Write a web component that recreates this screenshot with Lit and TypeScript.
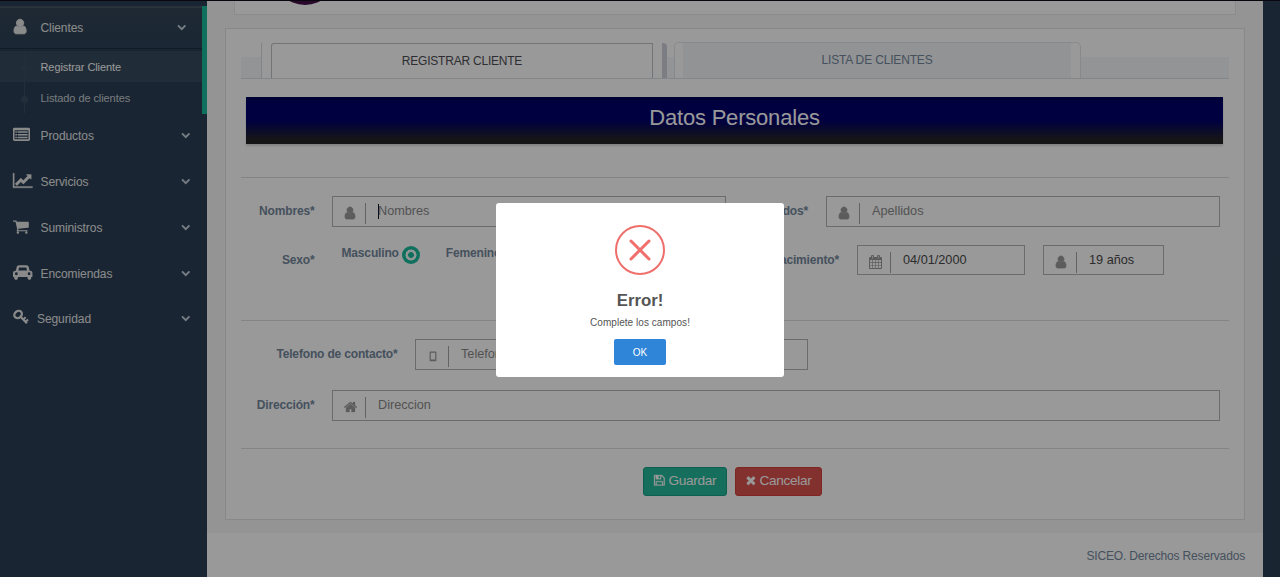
import { LitElement, html, svg, css, nothing } from "lit";
import { customElement, property } from "lit/decorators.js";

const ICONS: Record<string, { box: string; body: unknown }> = {
  user: {
    box: "256 0 1280 1792",
    body: svg`<path stroke="currentColor" stroke-width="100" d="M1536 1399q0 109-62.5 187t-150.5 78h-854q-88 0-150.5-78t-62.5-187q0-85 8.5-160.5t31.5-152 58.5-131 94-89 134.5-34.5q131 128 313 128t313-128q76 0 134.5 34.5t94 89 58.5 131 31.5 152 8.5 160.5zm-256-887q0 159-112.5 271.5t-271.5 112.5-271.5-112.5-112.5-271.5 112.5-271.5 271.5-112.5 271.5 112.5 112.5 271.5z"/>`,
  },
  chevron: {
    box: "0 0 1792 1792",
    body: svg`<path d="M1683 808l-742 741q-19 19-45 19t-45-19l-742-741q-19-19-19-45.5t19-45.5l166-165q19-19 45-19t45 19l531 531 531-531q19-19 45-19t45 19l166 165q19 19 19 45.5t-19 45.5z"/>`,
  },
  list: {
    box: "0 0 1792 1792",
    body: svg`<path fill-rule="evenodd" d="M160 176h1472q66 0 113 47t47 113v1088q0 66-47 113t-113 47h-1472q-66 0-113-47t-47-113v-1088q0-66 47-113t113-47zM160 490v880q0 32 32 32h1408q32 0 32-32v-880q0-32-32-32h-1408q-32 0-32 32z"/><path d="M250 560h160v160h-160zM250 840h160v160h-160zM250 1120h160v160h-160zM490 560h1050v160h-1050zM490 840h1050v160h-1050zM490 1120h1050v160h-1050z"/>`,
  },
  chart: {
    box: "0 0 2048 1792",
    body: svg`<path stroke="currentColor" stroke-width="40" d="M2048 1536v128h-2048v-1536h128v1408h1920zm-128-1248v435q0 21-19.5 29.5t-35.5-7.5l-121-121-633 633q-10 10-23 10t-23-10l-233-233-416 416-192-192 585-585q10-10 23-10t23 10l233 233 464-464-121-121q-16-16-7.5-35.5t29.5-19.5h435q14 0 23 9t9 23z"/>`,
  },
  cart: {
    box: "64 0 1664 1792",
    body: svg`<path d="M704 1536q0 52-38 90t-90 38-90-38-38-90 38-90 90-38 90 38 38 90zm896 0q0 52-38 90t-90 38-90-38-38-90 38-90 90-38 90 38 38 90zm128-1088v512q0 24-16.5 42.5t-40.5 21.5l-1044 122q13 60 13 70 0 16-24 64h920q26 0 45 19t19 45-19 45-45 19h-1024q-26 0-45-19t-19-45q0-11 8-31.5t16-36 21.5-40 15.5-29.5l-177-823h-204q-26 0-45-19t-19-45 19-45 45-19h256q16 0 28.5 6.5t19.5 15.5 13 24.5 8 26 5.5 29.5 4.5 26h1201q26 0 45 19t19 45z"/>`,
  },
  car: {
    box: "0 0 2048 1792",
    body: svg`<path fill-rule="evenodd" d="M640 128h768q90 0 162 58t94 146l85 370h43q106 0 181 75t75 181v384q0 14-9 23t-23 9h-96v90q0 80-56 136t-136 56-136-56-56-136v-90h-1024v90q0 80-56 136t-136 56-136-56-56-136v-90h-96q-14 0-23-9t-9-23v-384q0-106 75-181t181-75h43l85-370q22-88 94-146t162-58zM564 690h920l-80-311q-4-7-6-7h-748q-2 0-6 7zM352 880a150 150 0 1 0 0 300 150 150 0 1 0 0-300zM1696 880a150 150 0 1 0 0 300 150 150 0 1 0 0-300z"/>`,
  },
  key: {
    box: "0 0 18 18",
    body: svg`<g fill="none" stroke="currentColor"><ellipse cx="5.4" cy="5.8" rx="4.3" ry="3.5" transform="rotate(-40 5.4 5.8)" stroke-width="2.4"/><path d="M8 8.1l6.7 6.9" stroke-width="2.3"/><path d="M10.8 11.2l2.6-2.5M13.2 13.7l2.7-2.6" stroke-width="2.1"/></g>`,
  },
  calendar: {
    box: "64 0 1664 1792",
    body: svg`<path fill-rule="evenodd" d="M192 256h128v-96q0-66 47-113t113-47h64q66 0 113 47t47 113v96h384v-96q0-66 47-113t113-47h64q66 0 113 47t47 113v96h128q52 0 90 38t38 90v1280q0 52-38 90t-90 38H192q-52 0-90-38t-38-90V384q0-52 38-90t90-38zM192 640v256h288V640zM560 640v256h296V640zM936 640v256h296V640zM1312 640v256h288V640zM192 976v288h288V976zM560 976v288h296V976zM936 976v288h296V976zM1312 976v288h288V976zM192 1344v320h288v-320zM560 1344v320h296v-320zM936 1344v320h296v-320zM1312 1344v320h288v-320zM470 140v300h84V140zM1238 140v300h84V140z"/>`,
  },
  mobile: {
    box: "0 0 1024 1792",
    body: svg`<path fill-rule="evenodd" d="M180 320h664q100 0 100 100v1044q0 100-100 100H180q-100 0-100-100V420q0-100 100-100zM230 490v860h564V490z"/>`,
  },
  home: {
    box: "64 0 1664 1792",
    body: svg`<path stroke="currentColor" stroke-width="30" d="M1472 992v480q0 26-19 45t-45 19h-384v-384h-256v384h-384q-26 0-45-19t-19-45v-480q0-1 .5-3t.5-3l575-474 575 474q1 2 1 6zm223-69l-62 74q-8 9-21 11h-3q-13 0-21-7l-692-577-692 577q-12 8-24 7-13-2-21-11l-62-74q-8-10-7-23.5t11-21.5l719-599q32-26 76-26t76 26l244 204v-195q0-14 9-23t23-9h192q14 0 23 9t9 23v408l219 182q10 8 11 21.5t-7 23.5z"/>`,
  },
  save: {
    box: "128 0 1536 1792",
    body: svg`<path stroke="currentColor" stroke-width="40" d="M512 1536h768v-384h-768v384zm896 0h128v-896q0-14-10-38.5t-20-34.5l-281-281q-10-10-34-20t-39-10v416q0 40-28 68t-68 28h-576q-40 0-68-28t-28-68v-416h-128v1280h128v-416q0-40 28-68t68-28h832q40 0 68 28t28 68v416zm-384-928v-320q0-13-9.5-22.5t-22.5-9.5h-192q-13 0-22.5 9.5t-9.5 22.5v320q0 13 9.5 22.5t22.5 9.5h192q13 0 22.5-9.5t9.5-22.5zm640 32v928q0 40-28 68t-68 28h-1344q-40 0-68-28t-28-68v-1344q0-40 28-68t68-28h928q40 0 88 20t76 48l280 280q28 28 48 76t20 88z"/>`,
  },
  times: {
    box: "192 0 1408 1792",
    body: svg`<path stroke="currentColor" stroke-width="70" d="M1490 1322q0 40-28 68l-136 136q-28 28-68 28t-68-28l-294-294-294 294q-28 28-68 28t-68-28l-136-136q-28-28-28-68t28-68l294-294-294-294q-28-28-28-68t28-68l136-136q28-28 68-28t68 28l294 294 294-294q28-28 68-28t68 28l136 136q28 28 28 68t-28 68l-294 294 294 294q28 28 28 68z"/>`,
  },
};

@customElement("fa-icon")
class FaIcon extends LitElement {
  @property() name = "user";
  static styles = css`
    :host { display: inline-flex; flex: none; height: 1em; }
    svg { height: 100%; width: auto; fill: currentColor; display: block; overflow: visible; }
  `;
  render() {
    const icon = ICONS[this.name];
    return html`<svg viewBox=${icon.box}>${icon.body}</svg>`;
  }
}

@customElement("form-field")
class FormField extends LitElement {
  @property() icon = "user";
  @property() text = "";
  @property({ type: Boolean }) filled = false;
  @property({ type: Boolean }) caret = false;
  static styles = css`
    :host { display: flex; box-sizing: border-box; height: 31px; border: 1px solid #b4b4b4; color: #8a8a8a; font-size: 12.7px; letter-spacing: 0; }
    :host([filled]) { color: #4a4a4a; height: 30px; }
    .addon { width: 33px; height: 21px; margin-top: 6px; flex: none; box-sizing: border-box; border-right: 1px solid #a6a6a6;
      display: flex; justify-content: center; align-items: flex-start; padding: 3px 0 0 2px; font-size: 14px; color: #999; }
    .value { padding-left: 12px; line-height: 28px; white-space: pre; }
    .bar { display: inline-block; width: 1px; height: 15px; background: #111; vertical-align: middle; margin-right: -1px; }
  `;
  render() {
    return html`<span class="addon"><fa-icon name=${this.icon}></fa-icon></span>
      <span class="value">${this.caret ? html`<i class="bar"></i>` : nothing}${this.text}</span>`;
  }
}

const MENU = [
  { icon: "list", label: "Productos" },
  { icon: "chart", label: "Servicios" },
  { icon: "cart", label: "Suministros" },
  { icon: "car", label: "Encomiendas" },
  { icon: "key", label: "Seguridad" },
];

@customElement("app-root")
class AppRoot extends LitElement {
  static styles = css`
    :host { display: block; height: 577px; overflow: hidden; position: relative; letter-spacing: -.16px;
      font-family: "Liberation Sans", Arial, sans-serif; font-size: 12px; color: #73879c; background: #2a3f54; }
    * { box-sizing: border-box; }
    .edge { height: 1px; background: #120a18; }
    .page { display: grid; grid-template-columns: 207px 1056px 17px; height: 576px; }

    .side { color: #e7e7e7; padding-top: 5px; letter-spacing: -.08px; }
    .group { height: 108px; border-right: 5px solid #1abb9c; margin-bottom: -1px; }
    .head { display: flex; align-items: center; height: 42px; padding: 1px 16px 0 13px; border-top: 1px solid #46525e;
      background: linear-gradient(#334556, #2c4257), #2a3f54; box-shadow: rgba(0,0,0,.25) 0 1px 0, inset rgba(255,255,255,.1) 0 1px 0; }
    .pic { width: 27.5px; font-size: 18px; display: flex; }
    .head .pic { font-size: 17px; padding: 0 0 3px .5px; }
    .label { flex: 1; }
    .chev { font-size: 9.5px; color: #c4cfda; margin-top: -2px; }
    .subs { padding-top: 3px; display: flex; flex-direction: column; }
    .sub { height: 31px; display: flex; align-items: center; font-size: 11px; color: rgba(255,255,255,.75); }
    .sub.on { background: rgba(255,255,255,.06); color: #fff; }
    .rail { width: 40.5px; align-self: stretch; display: flex; justify-content: center; align-items: center; padding-left: 8px;
      background: linear-gradient(#3a4e61, #3a4e61) 24px 0 / 1px 100% no-repeat; }
    .dot { width: 7px; height: 7px; border-radius: 50%; background: #3a4e61; margin-top: 4px; }
    .item { display: flex; align-items: center; height: 46px; padding: 0 16.5px 0 13px; }
    .item:last-child { height: 44px; }
    .item:last-child .pic { width: 24px; }
    .menu .pic { padding-bottom: 3px; font-size: 17px; }

    .main { background: #f7f7f7; display: flex; flex-direction: column; }
    .prev { height: 14px; margin: 0 27px 13px; background: #fff; border: 1px solid #e6e9ed; border-top: 0; overflow: hidden; padding-left: 38px; }
    .logo { width: 64px; height: 64px; border-radius: 50%; background: #43104a; margin-top: -60px; }
    .panel { height: 492px; margin: 0 18px 13px; background: #fff; border: 1px solid #e0e3e6; padding: 13px 15px 0; display: flex; flex-direction: column; }
    .tabs { display: flex; height: 37px; align-items: flex-end; border-bottom: 1px solid #dbe0e4;
      background: linear-gradient(#f5f7fa, #f5f7fa) 0 15px / 100% 22px no-repeat; }
    .lead { width: 21px; height: 35px; border-right: 1px solid #dadde0; background: linear-gradient(#fff, #fff) 0 0 / 100% 13px no-repeat; }
    .gap { width: 9px; height: 36px; background: #fff; }
    .tab { width: 382px; height: 35px; background: #fff; border: 1px solid #bfc3c6; border-bottom: 0; border-radius: 3px 0 0 0;
      display: flex; align-items: center; justify-content: center; color: #4e4e54; letter-spacing: -.22px; padding-bottom: 1px; }
    .slab { width: 5px; height: 35px; background: #cfd1da; border-radius: 0 4px 0 0; margin-right: 7px; }
    .tab2 { width: 407px; height: 36px; border: 1px solid #e2e5e8; border-bottom: 0; border-radius: 5px 5px 0 0; background: #fff; padding: 0 9px 0 8px; display: flex; }
    .tab2 span { flex: 1; background: #f3f5f8; display: flex; align-items: center; justify-content: center; padding-bottom: 2px; }
    .banner { margin: 18px 6px 0 5px; height: 47px; background: linear-gradient(#000058 0, #00006c 15%, #00006c 50%, #242428 90%); box-shadow: 0 2px 2px #d8d8d8;
      color: #fff; font-size: 22px; letter-spacing: -.2px; display: flex; justify-content: center; padding-top: 8px; line-height: 25px; }
    .row { display: flex; }
    .rule { height: 1px; background: #dcdcdc; flex: none; }
    .r1 { margin-top: 33px; }
    .r2 { margin-top: 44px; }
    .r3 { margin-top: 27px; }
    .names { margin-top: 18px; }
    .sex { margin-top: 18px; }
    .tel { margin-top: 18px; }
    .dir { margin-top: 20px; }
    .lbl { font-weight: bold; text-align: right; line-height: 31px; white-space: nowrap; flex: none; padding-right: 17.5px; }
    .a { width: 91px; }
    .b { width: 100px; padding-right: 18px; }
    .c { width: 174px; }
    .d { width: 361px; padding-right: 18px; }
    .w394 { width: 394px; }
    .w393 { width: 393px; }
    .w888 { width: 888px; }
    .w168 { width: 168px; margin-right: 18px; }
    .w121 { width: 121px; }
    .gender { width: 164px; padding-left: 9.5px; display: flex; font-weight: bold; line-height: 17px; white-space: nowrap; }
    .radio { width: 18px; height: 18px; border-radius: 50%; background: radial-gradient(circle, #1abb9c 0 2.6px, #f2f8f6 3.2px 5.2px, #1abb9c 5.8px);
      margin: 1px 26px 0 3px; flex: none; }
    .actions { display: flex; justify-content: center; gap: 8px; margin-top: 18px; padding-right: 5px; }
    .btn { height: 29px; border-radius: 3px; color: #fff; font-size: 13.6px; letter-spacing: -.3px; display: flex; align-items: center; justify-content: center; gap: 4px; padding-bottom: 2px; }
    .btn fa-icon { font-size: 12.5px; }
    .save { width: 84px; background: #26b99a; border: 1px solid #169f85; }
    .cancel { width: 87px; background: #d9534f; border: 1px solid #d43f3a; }
    .foot { flex: 1; background: #fff; padding: 16px 18px 0; text-align: right; line-height: 14px; }

    .veil { position: absolute; inset: 0; background: rgba(0,0,0,.4); display: flex; justify-content: center; align-items: flex-start; padding-top: 203px; letter-spacing: 0; }
    .modal { width: 288px; height: 174px; background: #fff; border-radius: 3px; display: flex; flex-direction: column; align-items: center; padding-top: 22px; }
    .mark { width: 50px; height: 50px; display: block; fill: none; stroke: #ee6f6c; }
    .title { font-size: 16.8px; font-weight: bold; color: #555; line-height: 20px; margin-top: 16px; }
    .msg { font-size: 10px; color: #545454; line-height: 12px; margin-top: 6px; letter-spacing: .05px; }
    .ok { width: 52px; height: 26px; background: #2f86d8; color: #fff; border-radius: 2px; font-size: 10px; display: flex; align-items: center; justify-content: center; margin-top: 10px; }
  `;

  render() {
    return html`
      <div class="edge"></div>
      <div class="page">
        <nav class="side">
          <div class="group">
            <div class="head"><span class="pic"><fa-icon name="user"></fa-icon></span><span class="label">Clientes</span><fa-icon class="chev" name="chevron"></fa-icon></div>
            <div class="subs">
              <div class="sub on"><span class="rail"><i class="dot"></i></span>Registrar Cliente</div>
              <div class="sub"><span class="rail"><i class="dot"></i></span>Listado de clientes</div>
            </div>
          </div>
          <div class="menu">
            ${MENU.map((m) => html`<div class="item"><span class="pic"><fa-icon name=${m.icon}></fa-icon></span><span class="label">${m.label}</span><fa-icon class="chev" name="chevron"></fa-icon></div>`)}
          </div>
        </nav>
        <main class="main">
          <div class="prev"><div class="logo"></div></div>
          <section class="panel">
            <div class="tabs">
              <div class="lead"></div><div class="gap"></div>
              <div class="tab">REGISTRAR CLIENTE</div><div class="gap"></div>
              <div class="slab"></div>
              <div class="tab2"><span>LISTA DE CLIENTES</span></div>
            </div>
            <div class="banner">Datos Personales</div>
            <div class="rule r1"></div>
            <div class="row names">
              <label class="lbl a">Nombres*</label>
              <form-field class="w394" text="Nombres" caret></form-field>
              <label class="lbl b">Apellidos*</label>
              <form-field class="w394" text="Apellidos"></form-field>
            </div>
            <div class="row sex">
              <label class="lbl a">Sexo*</label>
              <div class="gender">Masculino<i class="radio"></i>Femenino</div>
              <label class="lbl d">Fecha de nacimiento*</label>
              <form-field class="w168" icon="calendar" text="04/01/2000" filled></form-field>
              <form-field class="w121" text="19 años" filled></form-field>
            </div>
            <div class="rule r2"></div>
            <div class="row tel">
              <label class="lbl c">Telefono de contacto*</label>
              <form-field class="w393" icon="mobile" text="Telefono"></form-field>
            </div>
            <div class="row dir">
              <label class="lbl a">Dirección*</label>
              <form-field class="w888" icon="home" text="Direccion"></form-field>
            </div>
            <div class="rule r3"></div>
            <div class="actions">
              <div class="btn save"><fa-icon name="save"></fa-icon>Guardar</div>
              <div class="btn cancel"><fa-icon name="times"></fa-icon>Cancelar</div>
            </div>
          </section>
          <footer class="foot">SICEO. Derechos Reservados</footer>
        </main>
      </div>
      <div class="veil">
        <div class="modal" role="dialog">
          <svg class="mark" viewBox="0 0 50 50"><circle cx="25" cy="25" r="24" stroke-width="2"/><path d="M16 16l18 18M34 16l-18 18" stroke-width="3" stroke-linecap="round"/></svg>
          <div class="title">Error!</div>
          <div class="msg">Complete los campos!</div>
          <div class="ok">OK</div>
        </div>
      </div>`;
  }
}
